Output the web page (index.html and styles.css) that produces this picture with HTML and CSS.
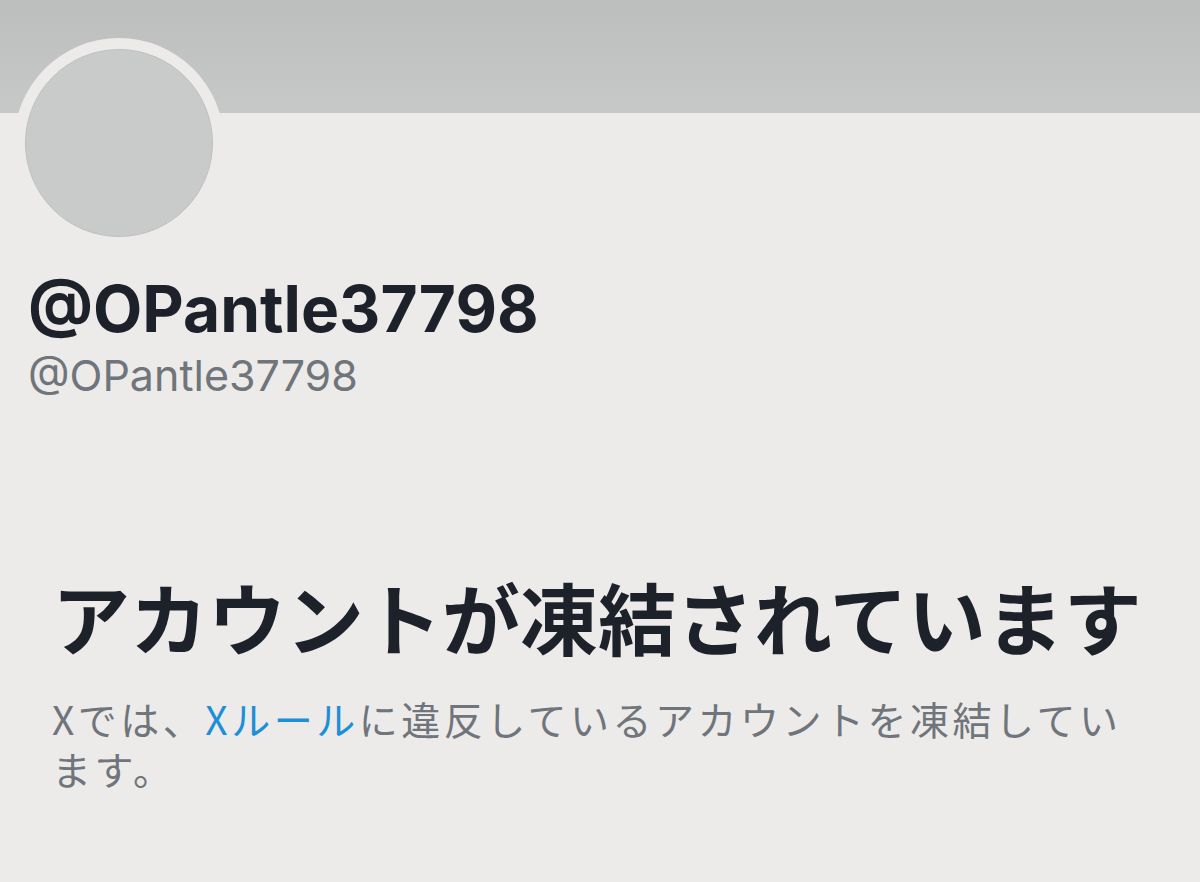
FILE: index.html
```html
<!DOCTYPE html>
<html lang="ja">
<head>
<meta charset="utf-8">
<title>@OPantle37798</title>
<link rel="stylesheet" href="styles.css">
</head>
<body>
<div class="banner"></div>
<main class="profile">
  <div class="avatar-ring"><div class="avatar"></div></div>
  <h1 class="name">@OPantle37798</h1>
  <div class="handle">@OPantle37798</div>
  <section class="notice">
    <h2 class="notice-title">アカウントが凍結されています</h2>
    <p class="notice-text">Xでは、<a class="link" href="#">Xルール</a>に違反しているアカウントを凍結しています。</p>
  </section>
</main>
</body>
</html>
```
FILE: styles.css
```css
html, body {
  margin: 0;
  padding: 0;
  background: #ecebe9;
  height: 100%;
  overflow: hidden;
}
body {
  font-family: "Inter", "Noto Sans CJK JP", sans-serif;
}
.banner {
  height: 113px;
  background: linear-gradient(#bcbdbd, #c7c8c8);
}
.profile {
  padding: 0 28px;
}
.avatar-ring {
  width: 210px;
  height: 210px;
  margin-top: -75px;
  margin-left: -14px;
  border-radius: 50%;
  background: #ecebe9;
  display: flex;
  align-items: center;
  justify-content: center;
}
.avatar {
  width: 186px;
  height: 186px;
  border-radius: 50%;
  background: #c9cbcb;
  border: 1px solid #bfc1c1;
}
.name {
  margin: 25px 0 0;
  font-size: 64px;
  font-weight: 700;
  line-height: 72px;
  color: #1d2129;
}
.handle {
  margin-top: 6px;
  font-size: 43px;
  line-height: 48px;
  color: #6f757b;
}
.notice {
  padding: 0 24px;
  margin-top: 167px;
}
.notice-title {
  margin: 0;
  font-family: "Noto Sans CJK JP", sans-serif;
  font-weight: 700;
  font-size: 78px;
  line-height: 100px;
  color: #1d2129;
}
.notice-text {
  margin: 27px 0 0;
  font-family: "Noto Sans CJK JP", sans-serif;
  font-size: 39px;
  line-height: 50px;
  letter-spacing: 3.5px;
  color: #6f757b;
}
.link {
  color: #1d8ed8;
  text-decoration: none;
}
```
